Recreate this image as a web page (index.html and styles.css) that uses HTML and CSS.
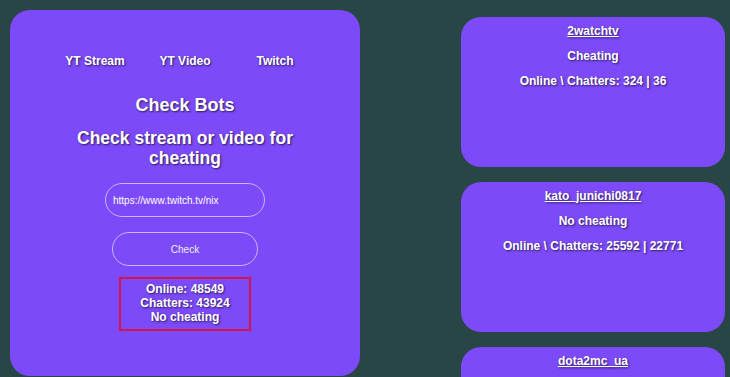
FILE: index.html
```html
<!DOCTYPE html>
<html lang="en">

<head>
    <meta charset="UTF-8">
    <meta name="viewport" content="width=device-width, initial-scale=1.0">
    <title>Check Bots</title>
    <link rel="stylesheet" href="styles.css">
</head>

<body>
    <div class="page">
        <div class="checker">
            <ul class="tabs">
                <li><a href="#">YT Stream</a></li>
                <li><a href="#">YT Video</a></li>
                <li><a href="#">Twitch</a></li>
            </ul>

            <h1>Check Bots</h1>
            <h2>Check stream or video for cheating</h2>

            <form class="check-form">
                <input type="text" value="https://www.twitch.tv/nix">
                <button type="button">Check</button>
            </form>

            <div class="result">
                <p>Online: 48549</p>
                <p>Chatters: 43924</p>
                <p>No cheating</p>
            </div>
        </div>

        <div class="streams">
            <div class="stream-card">
                <a href="#">2watchtv</a>
                <p>Cheating</p>
                <p>Online \ Chatters: 324 | 36</p>
            </div>
            <div class="stream-card">
                <a href="#">kato_junichi0817</a>
                <p>No cheating</p>
                <p>Online \ Chatters: 25592 | 22771</p>
            </div>
            <div class="stream-card">
                <a href="#">dota2mc_ua</a>
            </div>
        </div>
    </div>
</body>

</html>
```

FILE: styles.css
```css
body {
    font-family: "Liberation Sans", Arial, sans-serif;
    margin: 0;
    padding: 0;
    height: 100vh;
    background-color: #294646;
    color: #fff;
    overflow: hidden;
}

.page {
    display: flex;
    align-items: flex-start;
    padding: 10px 0 0 10px;
}

.checker {
    width: 350px;
    height: 366px;
    background-color: #7c4af9;
    border-radius: 20px;
    text-align: center;
    text-shadow: 1px 1px 2px #2a1d55;
}

.tabs {
    list-style-type: none;
    display: flex;
    justify-content: center;
    margin: 41px 0 0;
    padding: 0;
}

.tabs li {
    width: 90px;
}

.tabs li a {
    color: #fff;
    text-decoration: none;
    font-size: 12px;
    font-weight: bold;
}

.checker h1 {
    font-size: 18px;
    margin: 26px 0 0;
}

.checker h2 {
    font-size: 17.5px;
    line-height: 20px;
    margin: 12px auto 0;
    width: 240px;
}

.check-form {
    display: flex;
    flex-direction: column;
    align-items: center;
    margin-top: 15px;
}

.check-form input {
    width: 160px;
    height: 34px;
    box-sizing: border-box;
    padding: 0 7px;
    border: 1px solid #c9b6ff;
    border-radius: 17px;
    background: transparent;
    color: #fff;
    font-family: inherit;
    font-size: 10px;
    outline: none;
}

.check-form button {
    width: 146px;
    height: 34px;
    margin-top: 15px;
    border: 1px solid #c9b6ff;
    border-radius: 17px;
    background: transparent;
    color: #eee;
    font-family: inherit;
    font-size: 10px;
    cursor: pointer;
}

.result {
    width: 132px;
    margin: 11px auto 0;
    padding: 3px 0 5px;
    box-sizing: border-box;
    border: 2px solid #d1164a;
    font-size: 12px;
    font-weight: bold;
    line-height: 14px;
}

.result p {
    margin: 0;
}

.streams {
    display: flex;
    flex-direction: column;
    gap: 15px;
    margin: 7px 0 0 101px;
}

.stream-card {
    width: 264px;
    height: 150px;
    background-color: #7c4af9;
    border-radius: 20px;
    text-align: center;
    text-shadow: 1px 1px 2px #2a1d55;
    font-size: 12px;
    font-weight: bold;
    padding-top: 7px;
    box-sizing: border-box;
}

.stream-card a {
    color: #fff;
    display: inline-block;
}

.stream-card p {
    margin: 11px 0 0;
}
```
